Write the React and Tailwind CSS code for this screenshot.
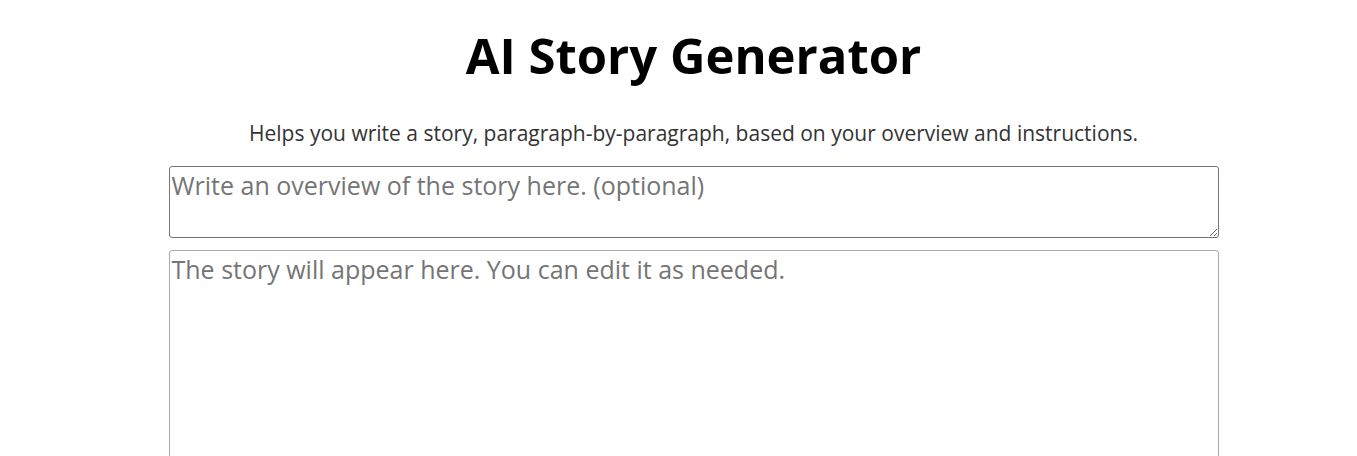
export default function App() {
  return (
    <div className="min-h-screen bg-white pl-[30px] font-['Open_Sans','Noto_Sans',sans-serif]">
      <div className="mx-auto flex w-[1050px] flex-col items-center">
        <h1 className="mt-[22px] text-[49px] font-bold leading-[66px] text-black">AI Story Generator</h1>
        <p className="mt-[31px] text-[21px] leading-[28px] text-[#333]">Helps you write a story, paragraph-by-paragraph, based on your overview and instructions.</p>
        <textarea
          className="mt-[19px] box-border block h-[72px] w-[1050px] resize-y rounded-[3px] border border-[#767676] p-[2px] text-[25px] leading-[32px] text-black placeholder:text-[#757575] focus:outline-none"
          placeholder="Write an overview of the story here. (optional)"
        />
        <textarea
          className="mt-[12px] box-border block h-[300px] w-[1050px] resize-none rounded-[3px] border border-[#a9a9a9] p-[2px] text-[25px] leading-[32px] text-black placeholder:text-[#757575] focus:outline-none"
          placeholder="The story will appear here. You can edit it as needed."
        />
      </div>
    </div>
  );
}
